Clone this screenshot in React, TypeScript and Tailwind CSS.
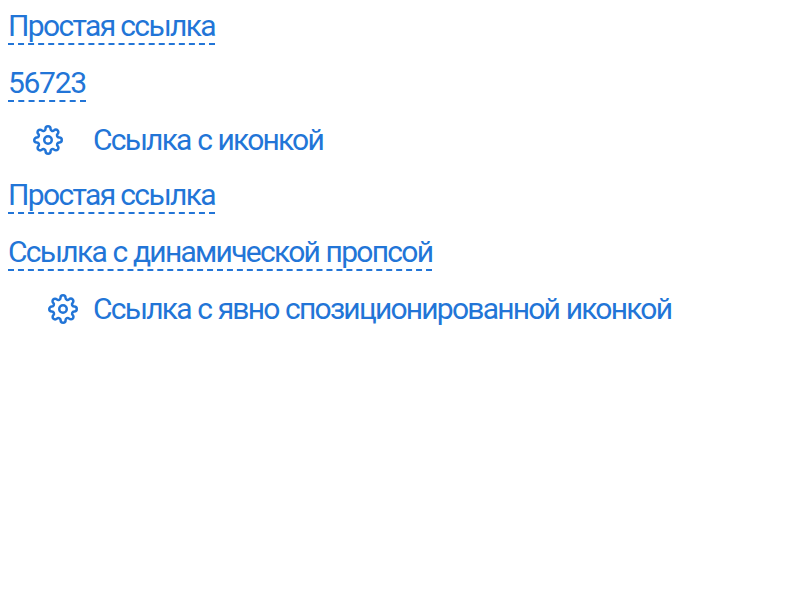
function Gear() {
  return (
    <svg viewBox="0 0 24 24" className="block h-[30px] w-[30px] shrink-0" fill="none" stroke="currentColor" strokeWidth="2" strokeLinecap="round" strokeLinejoin="round">
      <circle cx="12" cy="12" r="3" />
      <path d="M19.4 15a1.65 1.65 0 0 0 .33 1.82l.06.06a2 2 0 0 1 0 2.83 2 2 0 0 1-2.83 0l-.06-.06a1.65 1.65 0 0 0-1.82-.33 1.65 1.65 0 0 0-1 1.51V21a2 2 0 0 1-2 2 2 2 0 0 1-2-2v-.09A1.65 1.65 0 0 0 9 19.4a1.65 1.65 0 0 0-1.82.33l-.06.06a2 2 0 0 1-2.83 0 2 2 0 0 1 0-2.83l.06-.06a1.65 1.65 0 0 0 .33-1.82 1.65 1.65 0 0 0-1.51-1H3a2 2 0 0 1-2-2 2 2 0 0 1 2-2h.09A1.65 1.65 0 0 0 4.6 9a1.65 1.65 0 0 0-.33-1.82l-.06-.06a2 2 0 0 1 0-2.83 2 2 0 0 1 2.83 0l.06.06a1.65 1.65 0 0 0 1.82.33H9a1.65 1.65 0 0 0 1-1.51V3a2 2 0 0 1 2-2 2 2 0 0 1 2 2v.09a1.65 1.65 0 0 0 1 1.51 1.65 1.65 0 0 0 1.82-.33l.06-.06a2 2 0 0 1 2.83 0 2 2 0 0 1 0 2.83l-.06.06a1.65 1.65 0 0 0-.33 1.82V9a1.65 1.65 0 0 0 1.51 1H21a2 2 0 0 1 2 2 2 2 0 0 1-2 2h-.09a1.65 1.65 0 0 0-1.51 1z" />
    </svg>
  );
}

function Dashed({ text }: { text: string }) {
  return <a className="border-b-2 border-dashed border-[#2275d7] leading-[35px]">{text}</a>;
}

export default function App() {
  return (
    <main className="flex h-[600px] flex-col items-start bg-white pt-2 pl-2 font-['Roboto',sans-serif] text-[30px] leading-9 tracking-[-1.65px] whitespace-nowrap text-[#2275d7]">
      <div className="mb-5 flex"><Dashed text="Простая ссылка" /></div>
      <div className="mb-5 flex tracking-[-1.3px]"><Dashed text="56723" /></div>
      <div className="mb-[19px] flex items-center pl-[25px] tracking-[-1.8px] [word-spacing:0.9px]"><Gear /><a className="ml-[30px]">Ссылка с иконкой</a></div>
      <div className="mb-5 flex"><Dashed text="Простая ссылка" /></div>
      <div className="mb-5 flex tracking-[-1.72px] [word-spacing:0.7px]"><Dashed text="Ссылка с динамической пропсой" /></div>
      <div className="flex items-center pl-[40px] tracking-[-1.77px] [word-spacing:0.8px]"><Gear /><a className="ml-[15px]">Ссылка с явно спозиционированной иконкой</a></div>
    </main>
  );
}
